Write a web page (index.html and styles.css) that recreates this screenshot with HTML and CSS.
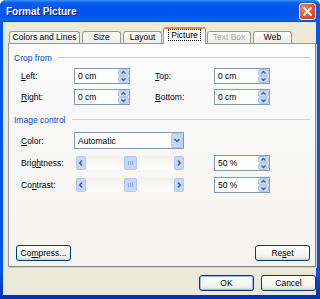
FILE: index.html
```html
<!DOCTYPE html>
<html lang="en">

<head>
    <meta charset="UTF-8">
    <meta name="viewport" content="width=device-width, initial-scale=1.0">
    <title>Format Picture</title>
    <link rel="stylesheet" href="styles.css">
</head>

<body>
    <div class="window">
        <div class="titlebar">
            <span class="title">Format Picture</span>
            <span class="close">
                <svg width="15" height="15" viewBox="0 0 15 15">
                    <path d="M4 4 L11 11 M11 4 L4 11" stroke="#fff" stroke-width="1.8" stroke-linecap="round" />
                </svg>
            </span>
        </div>

        <div class="client">
            <div class="tabs">
                <div class="tab tab-lines">Colors and Lines</div>
                <div class="tab tab-size">Size</div>
                <div class="tab tab-layout">Layout</div>
                <div class="tab tab-picture active"><span class="focus">Picture</span></div>
                <div class="tab tab-textbox disabled">Text Box</div>
                <div class="tab tab-web">Web</div>
            </div>

            <div class="panel">
                <div class="group-title">Crop from</div>
                <div class="crop-grid">
                    <span class="label"><u>L</u>eft:</span>
                    <div class="spin">
                        <span class="spin-value">0 cm</span>
                        <svg class="spin-btns" width="11" height="14" viewBox="0 0 11 14">
                            <rect x="0.5" y="0.5" width="10" height="6" rx="1.5" fill="#c6d6fc" stroke="#b3c7f4" />
                            <rect x="0.5" y="7.5" width="10" height="6" rx="1.5" fill="#c6d6fc" stroke="#b3c7f4" />
                            <path d="M3.5 4.5 L5.5 2.5 L7.5 4.5" fill="none" stroke="#4d6185" stroke-width="1.3" />
                            <path d="M3.5 9.5 L5.5 11.5 L7.5 9.5" fill="none" stroke="#4d6185" stroke-width="1.3" />
                        </svg>
                    </div>
                    <span></span>
                    <span class="label"><u>T</u>op:</span>
                    <div class="spin">
                        <span class="spin-value">0 cm</span>
                        <svg class="spin-btns" width="11" height="14" viewBox="0 0 11 14">
                            <rect x="0.5" y="0.5" width="10" height="6" rx="1.5" fill="#c6d6fc" stroke="#b3c7f4" />
                            <rect x="0.5" y="7.5" width="10" height="6" rx="1.5" fill="#c6d6fc" stroke="#b3c7f4" />
                            <path d="M3.5 4.5 L5.5 2.5 L7.5 4.5" fill="none" stroke="#4d6185" stroke-width="1.3" />
                            <path d="M3.5 9.5 L5.5 11.5 L7.5 9.5" fill="none" stroke="#4d6185" stroke-width="1.3" />
                        </svg>
                    </div>

                    <span class="label"><u>R</u>ight:</span>
                    <div class="spin">
                        <span class="spin-value">0 cm</span>
                        <svg class="spin-btns" width="11" height="14" viewBox="0 0 11 14">
                            <rect x="0.5" y="0.5" width="10" height="6" rx="1.5" fill="#c6d6fc" stroke="#b3c7f4" />
                            <rect x="0.5" y="7.5" width="10" height="6" rx="1.5" fill="#c6d6fc" stroke="#b3c7f4" />
                            <path d="M3.5 4.5 L5.5 2.5 L7.5 4.5" fill="none" stroke="#4d6185" stroke-width="1.3" />
                            <path d="M3.5 9.5 L5.5 11.5 L7.5 9.5" fill="none" stroke="#4d6185" stroke-width="1.3" />
                        </svg>
                    </div>
                    <span></span>
                    <span class="label"><u>B</u>ottom:</span>
                    <div class="spin">
                        <span class="spin-value">0 cm</span>
                        <svg class="spin-btns" width="11" height="14" viewBox="0 0 11 14">
                            <rect x="0.5" y="0.5" width="10" height="6" rx="1.5" fill="#c6d6fc" stroke="#b3c7f4" />
                            <rect x="0.5" y="7.5" width="10" height="6" rx="1.5" fill="#c6d6fc" stroke="#b3c7f4" />
                            <path d="M3.5 4.5 L5.5 2.5 L7.5 4.5" fill="none" stroke="#4d6185" stroke-width="1.3" />
                            <path d="M3.5 9.5 L5.5 11.5 L7.5 9.5" fill="none" stroke="#4d6185" stroke-width="1.3" />
                        </svg>
                    </div>
                </div>

                <div class="group-title group-image">Image control</div>
                <div class="image-grid">
                    <span class="label"><u>C</u>olor:</span>
                    <div class="select">
                        <span class="select-value">Automatic</span>
                        <svg class="select-btn" width="12" height="15" viewBox="0 0 12 15">
                            <rect x="0.5" y="0.5" width="11" height="14" rx="1.5" fill="#c6d6fc" stroke="#b3c7f4" />
                            <path d="M3.5 6 L6 8.5 L8.5 6" fill="none" stroke="#4d6185" stroke-width="1.5" />
                        </svg>
                    </div>
                    <span></span>
                    <span></span>

                    <span class="label">Brig<u>h</u>tness:</span>
                    <div class="scroll">
                        <svg width="10" height="14" viewBox="0 0 10 14">
                            <rect x="0.5" y="0.5" width="9" height="13" rx="1.5" fill="#c6d6fc" stroke="#b3c7f4" />
                            <path d="M6 4.5 L3.8 7 L6 9.5" fill="none" stroke="#4d6185" stroke-width="1.6" />
                        </svg>
                        <div class="track">
                            <svg width="13" height="14" viewBox="0 0 13 14">
                                <rect x="0.5" y="0.5" width="12" height="13" rx="1.5" fill="#c6d6fc" stroke="#b3c7f4" />
                                <path d="M4.5 5 V9 M6.5 5 V9 M8.5 5 V9" stroke="#8eaaf0" stroke-width="1" />
                            </svg>
                        </div>
                        <svg width="10" height="14" viewBox="0 0 10 14">
                            <rect x="0.5" y="0.5" width="9" height="13" rx="1.5" fill="#c6d6fc" stroke="#b3c7f4" />
                            <path d="M4 4.5 L6.2 7 L4 9.5" fill="none" stroke="#4d6185" stroke-width="1.6" />
                        </svg>
                    </div>
                    <span></span>
                    <div class="spin">
                        <span class="spin-value">50 %</span>
                        <svg class="spin-btns" width="11" height="14" viewBox="0 0 11 14">
                            <rect x="0.5" y="0.5" width="10" height="6" rx="1.5" fill="#c6d6fc" stroke="#b3c7f4" />
                            <rect x="0.5" y="7.5" width="10" height="6" rx="1.5" fill="#c6d6fc" stroke="#b3c7f4" />
                            <path d="M3.5 4.5 L5.5 2.5 L7.5 4.5" fill="none" stroke="#4d6185" stroke-width="1.3" />
                            <path d="M3.5 9.5 L5.5 11.5 L7.5 9.5" fill="none" stroke="#4d6185" stroke-width="1.3" />
                        </svg>
                    </div>

                    <span class="label">Co<u>n</u>trast:</span>
                    <div class="scroll">
                        <svg width="10" height="14" viewBox="0 0 10 14">
                            <rect x="0.5" y="0.5" width="9" height="13" rx="1.5" fill="#c6d6fc" stroke="#b3c7f4" />
                            <path d="M6 4.5 L3.8 7 L6 9.5" fill="none" stroke="#4d6185" stroke-width="1.6" />
                        </svg>
                        <div class="track">
                            <svg width="13" height="14" viewBox="0 0 13 14">
                                <rect x="0.5" y="0.5" width="12" height="13" rx="1.5" fill="#c6d6fc" stroke="#b3c7f4" />
                                <path d="M4.5 5 V9 M6.5 5 V9 M8.5 5 V9" stroke="#8eaaf0" stroke-width="1" />
                            </svg>
                        </div>
                        <svg width="10" height="14" viewBox="0 0 10 14">
                            <rect x="0.5" y="0.5" width="9" height="13" rx="1.5" fill="#c6d6fc" stroke="#b3c7f4" />
                            <path d="M4 4.5 L6.2 7 L4 9.5" fill="none" stroke="#4d6185" stroke-width="1.6" />
                        </svg>
                    </div>
                    <span></span>
                    <div class="spin">
                        <span class="spin-value">50 %</span>
                        <svg class="spin-btns" width="11" height="14" viewBox="0 0 11 14">
                            <rect x="0.5" y="0.5" width="10" height="6" rx="1.5" fill="#c6d6fc" stroke="#b3c7f4" />
                            <rect x="0.5" y="7.5" width="10" height="6" rx="1.5" fill="#c6d6fc" stroke="#b3c7f4" />
                            <path d="M3.5 4.5 L5.5 2.5 L7.5 4.5" fill="none" stroke="#4d6185" stroke-width="1.3" />
                            <path d="M3.5 9.5 L5.5 11.5 L7.5 9.5" fill="none" stroke="#4d6185" stroke-width="1.3" />
                        </svg>
                    </div>
                </div>

                <div class="panel-buttons">
                    <button class="btn">Co<u>m</u>press...</button>
                    <button class="btn">Re<u>s</u>et</button>
                </div>
            </div>

            <div class="footer">
                <button class="btn btn-default">OK</button>
                <button class="btn">Cancel</button>
            </div>
        </div>
    </div>
</body>

</html>
```

FILE: styles.css
```css
body {
    margin: 0;
    font-family: "Liberation Sans", Arial, sans-serif;
    font-size: 8.5px;
    color: #000;
    background: #fff;
}

.window {
    width: 320px;
    height: 299px;
    display: flex;
    flex-direction: column;
    background: linear-gradient(to bottom, #0058ee 0%, #0055e5 90%, #0030b0 100%);
    border-radius: 6px 6px 0 0;
    overflow: hidden;
}

.titlebar {
    height: 22px;
    flex-shrink: 0;
    display: flex;
    align-items: center;
    justify-content: space-between;
    padding: 0 4px 0 6px;
    background: linear-gradient(to bottom, #3d95ff 0%, #0a5fef 12%, #0054e8 45%, #0058ee 80%, #0062fb 92%, #0046d5 100%);
}

.title {
    color: #fff;
    font-weight: bold;
    font-size: 10px;
    text-shadow: 1px 1px 0 #0f1089;
}

.close {
    width: 15px;
    height: 15px;
    display: flex;
    border: 1px solid #fff;
    border-radius: 3px;
    background: radial-gradient(circle at 30% 30%, #f08a6a, #e0542e 55%, #c9401f);
}

.client {
    flex: 1;
    display: flex;
    flex-direction: column;
    margin: 0 4px 4px 3px;
    padding: 6px 0 4px 5px;
    background: #ece9d8;
}

.tabs {
    display: flex;
    align-items: flex-end;
    height: 15px;
    padding-left: 1px;
}

.tab {
    box-sizing: border-box;
    height: 12px;
    margin-right: 2px;
    border: 1px solid #919b9c;
    border-bottom: none;
    border-radius: 3px 3px 0 0;
    background: linear-gradient(to bottom, #ffffff, #ecebe6);
    text-align: center;
    line-height: 11px;
}

.tab-lines { width: 71px; }
.tab-size { width: 39px; }
.tab-layout { width: 39px; }
.tab-picture { width: 43px; }
.tab-textbox { width: 44px; }
.tab-web { width: 39px; }

.tab.active {
    position: relative;
    z-index: 1;
    height: 17px;
    margin: 0 1px -1px -1px;
    border-top: 2px solid #e68b2c;
    background: #fcfcfe;
    line-height: 13px;
}

.tab.disabled {
    color: #aca899;
}

.focus {
    border: 1px dotted #000;
    padding: 0 2px;
}

.panel {
    flex: 1;
    display: flex;
    flex-direction: column;
    padding: 8px 5px 5px 5px;
    border: 1px solid #919b9c;
    border-right-color: #7f8a8b;
    border-bottom-color: #7f8a8b;
    background: linear-gradient(to bottom, #fcfcfe, #f4f3ee);
    box-shadow: 1px 1px 0 #d0cec2;
}

.group-title {
    display: flex;
    align-items: center;
    height: 11px;
    color: #0046d5;
}

.group-title:after {
    content: '';
    flex: 1;
    margin-left: 6px;
    border-top: 1px solid #d0d0bf;
}

.group-image {
    margin-top: 9px;
}

.crop-grid {
    display: grid;
    grid-template-columns: 53px 56px 25px 59px 56px;
    grid-auto-rows: 16px;
    row-gap: 5px;
    margin: 5px 0 0 7px;
    align-items: center;
}

.image-grid {
    display: grid;
    grid-template-columns: 53px 110px 30px 56px;
    grid-auto-rows: 17px;
    row-gap: 5px;
    margin: 7px 0 0 7px;
    align-items: center;
}

.spin {
    box-sizing: border-box;
    height: 16px;
    display: flex;
    align-items: center;
    justify-content: space-between;
    border: 1px solid #7f9db9;
    background: #fff;
}

.spin-value {
    padding-left: 3px;
}

.spin-btns {
    display: block;
}

.select {
    box-sizing: border-box;
    height: 17px;
    display: flex;
    align-items: center;
    justify-content: space-between;
    border: 1px solid #7f9db9;
    background: #fff;
}

.select-value {
    padding-left: 3px;
}

.select-btn {
    display: block;
}

.scroll {
    display: flex;
    height: 14px;
    margin-left: 2px;
}

.scroll svg {
    display: block;
}

.track {
    flex: 1;
    display: flex;
    justify-content: center;
    background: linear-gradient(to bottom, #f3f1ec, #fefefe);
}

.panel-buttons {
    margin-top: auto;
    display: flex;
    justify-content: space-between;
    padding-left: 2px;
}

.btn {
    box-sizing: border-box;
    width: 55px;
    height: 16px;
    padding: 0;
    font-family: inherit;
    font-size: 8.5px;
    color: #000;
    border: 1px solid #003c74;
    border-radius: 3px;
    background: linear-gradient(to bottom, #ffffff, #f0f0ea 80%, #d6d0c5);
}

.btn-default {
    box-shadow: inset 0 0 0 1px #98b8f1;
}

.footer {
    display: flex;
    justify-content: flex-end;
    gap: 7px;
    margin-top: 8px;
}
```
